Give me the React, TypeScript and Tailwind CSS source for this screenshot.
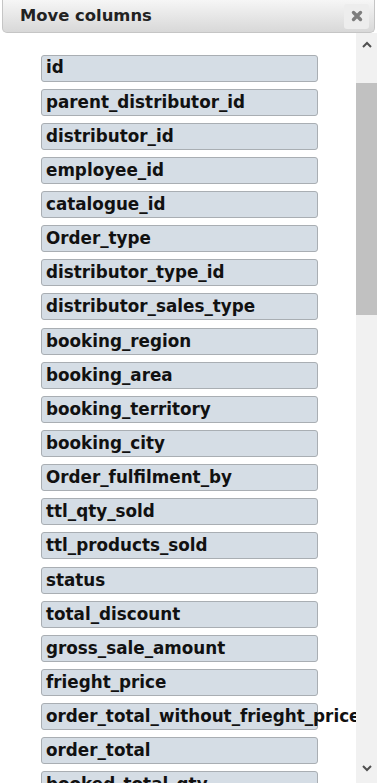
const columns = [
  "id",
  "parent_distributor_id",
  "distributor_id",
  "employee_id",
  "catalogue_id",
  "Order_type",
  "distributor_type_id",
  "distributor_sales_type",
  "booking_region",
  "booking_area",
  "booking_territory",
  "booking_city",
  "Order_fulfilment_by",
  "ttl_qty_sold",
  "ttl_products_sold",
  "status",
  "total_discount",
  "gross_sale_amount",
  "frieght_price",
  "order_total_without_frieght_price",
  "order_total",
  "booked_total_qty",
];

const ColumnItem = ({ name }: { name: string }) => {
  return (
    <li className="h-[27px] w-[277px] mb-[7.15px] bg-[#d5dde5] border border-[#a9aeb3] rounded-[3px] pl-[4px] flex items-center whitespace-nowrap text-[16.8px] font-bold text-[#111]">
      {name}
    </li>
  );
};

export default function App() {
  return (
    <div
      className="w-[377px] h-[783px] overflow-hidden bg-white flex flex-col"
      style={{ fontFamily: '"DejaVu Sans", Verdana, sans-serif' }}
    >
      <div className="mx-[2px] h-[33px] shrink-0 flex items-center justify-between pl-[17px] pr-[5px] border border-t-0 border-[#c5c5c5] rounded-b-[5px] bg-gradient-to-b from-[#f6f6f6] to-[#d8d8d8]">
        <span className="text-[16.4px] font-bold text-[#222]">Move columns</span>
        <button className="w-[25px] h-[25px] rounded-[3px] bg-[#ededed] flex items-center justify-center">
          <svg width="12" height="12" viewBox="0 0 12 12">
            <path d="M2.5 2.5 L9.5 9.5 M9.5 2.5 L2.5 9.5" stroke="#7d7d7d" strokeWidth="3.4" strokeLinecap="round" />
          </svg>
        </button>
      </div>

      <div className="flex flex-1 min-h-0">
        <div className="flex-1 overflow-hidden pt-[21.5px] pl-[41px]">
          <ul>
            {columns.map((c) => (
              <ColumnItem key={c} name={c} />
            ))}
          </ul>
        </div>

        <div className="w-[21px] shrink-0 bg-[#f1f1f1] flex flex-col">
          <div className="h-[17px] mt-[3px] flex items-center justify-center">
            <svg width="10" height="7" viewBox="0 0 10 7">
              <path d="M1 6 L5 2 L9 6" stroke="#505050" strokeWidth="2" fill="none" />
            </svg>
          </div>
          <div className="mt-[30px] h-[232px] bg-[#c1c1c1]" />
          <div className="flex-1" />
          <div className="h-[17px] mb-[6px] flex items-center justify-center">
            <svg width="10" height="7" viewBox="0 0 10 7">
              <path d="M1 1 L5 5 L9 1" stroke="#505050" strokeWidth="2" fill="none" />
            </svg>
          </div>
        </div>
      </div>
    </div>
  );
}
